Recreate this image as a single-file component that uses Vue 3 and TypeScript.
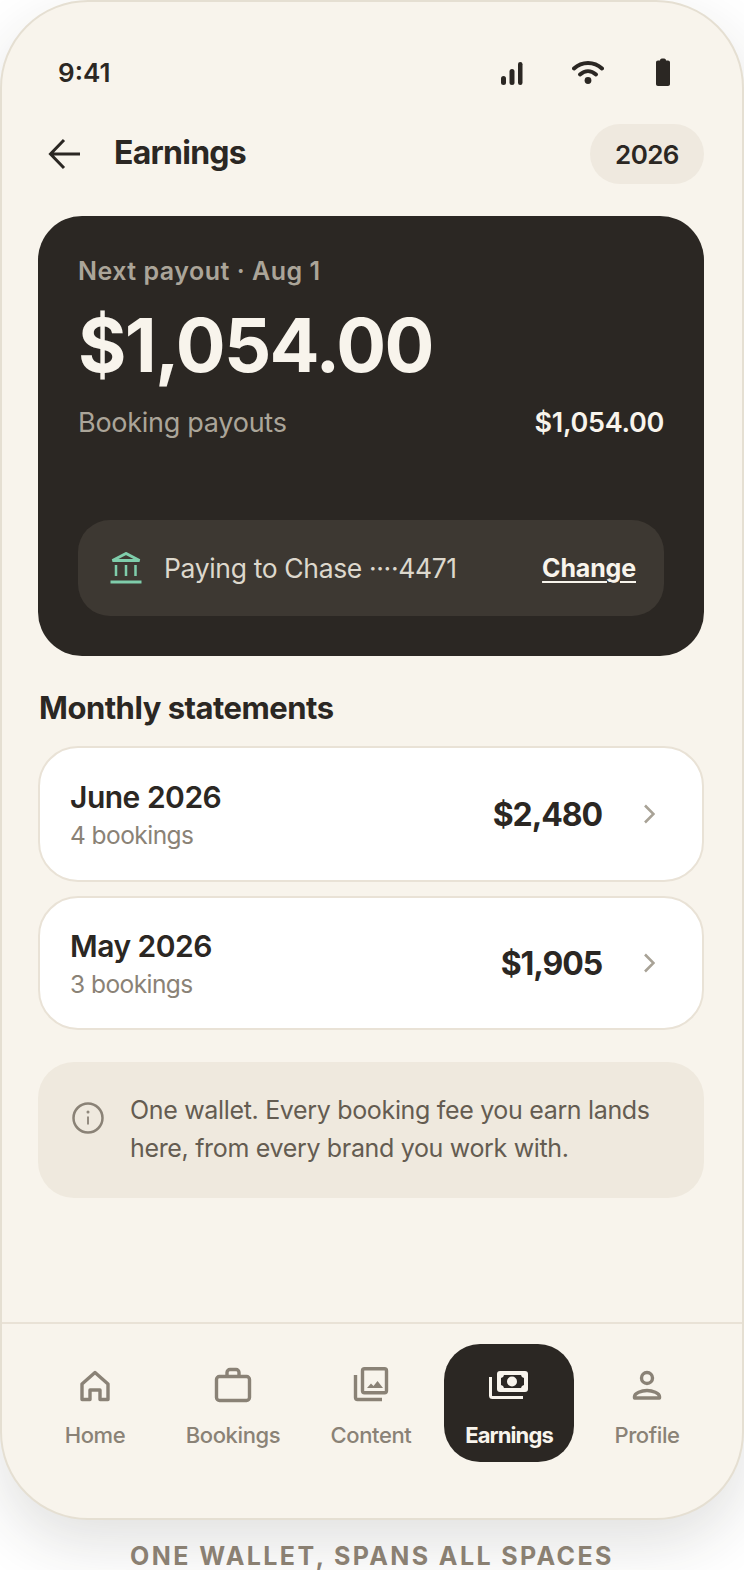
<template>
  <div class="page">
    <div class="phone">
      <div class="status">
        <span class="time">9:41</span>
        <div class="status-icons">
          <svg width="24" height="26" viewBox="0 0 24 26">
            <rect x="1" y="17" width="5" height="9" rx="2.5" />
            <rect x="9.5" y="10" width="5" height="16" rx="2.5" />
            <rect x="18" y="3" width="4.5" height="23" rx="2.2" />
          </svg>
          <svg width="32" height="26" viewBox="0 0 32 26" class="wifi">
            <path d="M2 9.5C10 2 22 2 30 9.5" />
            <path d="M8 15.5c5-4.5 11-4.5 16 0" />
            <circle cx="16" cy="21.5" r="3.4" />
          </svg>
          <svg class="battery" width="14" height="28" viewBox="0 0 14 28">
            <path d="M4 2.5C4 1 5 .5 7 .5s3 .5 3 2h2c1.2 0 2 .8 2 2V26c0 1.200-.8 2-2 2H2c-1.200 0-2-.8-2-2V4.500c0-1.200.8-2 2-2z" />
          </svg>
        </div>
      </div>

      <header class="top">
        <svg class="back" width="34" height="32" viewBox="0 0 34 32">
          <path d="M32 16H3M16 2 2.500 16 16 30" />
        </svg>
        <h1>Earnings</h1>
        <span class="year">2026</span>
      </header>

      <section class="payout">
        <div class="payout-label">Next payout · Aug 1</div>
        <div class="payout-amount">$1,054.00</div>
        <div class="payout-line">
          <span>Booking payouts</span>
          <strong>$1,054.00</strong>
        </div>
        <div class="bank">
          <svg width="32" height="32" viewBox="0 0 32 32">
            <path d="M16 1.500 2.500 8.500h27z" class="roof" />
            <path d="M6 13v11M16 13v11M25.500 13v11" class="cols" />
            <path d="M0.500 30h31" class="base" />
          </svg>
          <span class="bank-text">Paying to Chase ····4471</span>
          <a class="change">Change</a>
        </div>
      </section>

      <h2>Monthly statements</h2>
      <div class="statements">
        <div v-for="s in statements" :key="s.month" class="statement" :class="s.cls">
          <div class="statement-info">
            <div class="month">{{ s.month }}</div>
            <div class="count">{{ s.count }}</div>
          </div>
          <div class="total">{{ s.total }}</div>
          <svg class="chevron" width="12" height="20" viewBox="0 0 12 20">
            <path d="M2 1.500l8.500 8.500-8.500 8.500" />
          </svg>
        </div>
      </div>

      <div class="info">
        <svg width="32" height="32" viewBox="0 0 32 32">
          <circle cx="16" cy="16" r="14.500" />
          <path class="dot" d="M16 14.500v8" />
          <circle class="dot" cx="16" cy="10" r=".6" />
        </svg>
        <p>One wallet. Every booking fee you earn lands here, from every brand you work with.</p>
      </div>

      <nav class="tabs">
        <div v-for="t in tabs" :key="t.label" class="tab" :class="{ active: t.active }">
          <svg width="48" height="48" viewBox="0 0 48 48" v-html="t.icon"></svg>
          <span>{{ t.label }}</span>
        </div>
      </nav>
    </div>
    <div class="caption">ONE WALLET, SPANS ALL SPACES</div>
  </div>
</template>

<script setup lang="ts">
const statements = [
  { month: 'June 2026', count: '4 bookings', total: '$2,480', cls: 'tall' },
  { month: 'May 2026', count: '3 bookings', total: '$1,905', cls: '' },
]

const tabs = [
  {
    label: 'Home',
    icon: '<path d="M11 23 24 11.500 37 23v15.500h-8V29H19v9.500h-8z"/>',
  },
  {
    label: 'Bookings',
    icon: '<rect x="7.500" y="15.500" width="33" height="24" rx="3"/><path d="M18 15v-3.500a3 3 0 0 1 3-3h6a3 3 0 0 1 3 3V15"/>',
  },
  {
    label: 'Content',
    icon: '<rect x="15.500" y="7.700" width="24" height="24" rx="2"/><path d="M8.500 14v22.500a2 2 0 0 0 2 2H35"/><path class="fill" d="M20 27l4-4.500 2.500 2.500 4-5 5.500 7z"/>',
  },
  {
    label: 'Earnings',
    active: true,
    icon: '<path d="M5.500 16v18.500a2 2 0 0 0 2 2H38" stroke-width="3"/><rect class="fill" x="12" y="10" width="31" height="21" rx="3"/><path class="cut" d="M19 14h17a3.500 3.500 0 0 0 3 3v7a3.500 3.500 0 0 0-3 3H19a3.500 3.500 0 0 0-3-3v-7a3.500 3.500 0 0 0 3-3z"/><circle class="fill" cx="27" cy="20.500" r="5"/>',
  },
  {
    label: 'Profile',
    icon: '<circle cx="24" cy="17" r="5.500"/><path d="M11.500 37v-1.500c0-3.500 7-6 12.500-6s12.500 2.500 12.500 6V37z"/>',
  },
]
</script>

<style>
html,
body {
  margin: 0;
  background: #fff;
}
</style>

<style scoped>
.page {
  width: 744px;
  height: 1570px;
  overflow: hidden;
  font-family: Inter, "Liberation Sans", sans-serif;
  color: #2b2723;
}

.phone {
  box-sizing: border-box;
  height: 1520px;
  border: 2px solid #e5dfd2;
  border-radius: 88px;
  background: #f8f4ec;
  box-shadow: 0 24px 60px rgba(44, 40, 37, 0.14);
  display: flex;
  flex-direction: column;
}

.status {
  display: flex;
  align-items: center;
  justify-content: space-between;
  padding: 52px 72px 0 56px;
  height: 36px;
}

.time {
  font-size: 26px;
  font-weight: 600;
}

.status-icons {
  display: flex;
  align-items: center;
  gap: 48px;
}

.status-icons svg {
  fill: #2b2723;
}

.status-icons .wifi path {
  fill: none;
  stroke: #2b2723;
  stroke-width: 4;
  stroke-linecap: round;
}

.status-icons .battery {
  margin-left: 4px;
}

.top {
  display: flex;
  align-items: center;
  gap: 32px;
  height: 60px;
  margin-top: 34px;
  padding: 0 38px 0 46px;
}

.back {
  fill: none;
  stroke: #2b2723;
  stroke-width: 3;
}

h1 {
  flex: 1;
  margin: 0 0 3px;
  font-size: 32px;
  font-weight: 700;
  letter-spacing: -0.75px;
}

.year {
  width: 114px;
  height: 60px;
  border-radius: 30px;
  background: #efe9df;
  display: flex;
  align-items: center;
  justify-content: center;
  font-size: 26px;
  font-weight: 600;
  letter-spacing: -0.6px;
}

.payout {
  box-sizing: border-box;
  height: 440px;
  margin: 32px 38px 0 36px;
  padding: 40px;
  border-radius: 44px;
  background: #2b2723;
  display: flex;
  flex-direction: column;
}

.payout-label {
  font-size: 25px;
  line-height: 30px;
  font-weight: 600;
  letter-spacing: 0.5px;
  color: #aba599;
}

.payout-amount {
  margin-top: 17px;
  font-size: 74px;
  line-height: 84px;
  font-weight: 700;
  letter-spacing: -1.7px;
  color: #f8f4ec;
}

.payout-line {
  display: flex;
  justify-content: space-between;
  align-items: center;
  margin-top: 19px;
  font-size: 27px;
  line-height: 34px;
  letter-spacing: -0.27px;
  color: #aba599;
}

.payout-line strong {
  font-weight: 600;
  letter-spacing: -0.3px;
  color: #f8f4ec;
}

.bank {
  display: flex;
  align-items: center;
  height: 96px;
  margin-top: auto;
  padding: 0 28px 0 32px;
  border-radius: 32px;
  background: #3d3832;
}

.roof {
  fill: none;
  stroke: #7fcdab;
  stroke-width: 3;
}

.cols,
.base {
  fill: none;
  stroke: #7fcdab;
  stroke-width: 2.500;
}

.base {
  stroke-width: 3;
}

.bank-text {
  flex: 1;
  margin-left: 22px;
  font-size: 26.500px;
  letter-spacing: -0.35px;
  color: #ddd8cd;
}

.change {
  font-size: 25px;
  font-weight: 700;
  letter-spacing: -0.15px;
  color: #f8f4ec;
  text-decoration: underline;
  text-underline-offset: 4px;
}

h2 {
  margin: 33px 0 0 37px;
  font-size: 31px;
  line-height: 38px;
  font-weight: 700;
  letter-spacing: -0.5px;
}

.statements {
  display: flex;
  flex-direction: column;
  gap: 14px;
  margin: 19px 38px 0 36px;
}

.statement {
  box-sizing: border-box;
  height: 134px;
  padding: 0 47px 0 30px;
  border: 2px solid #e9e2d6;
  border-radius: 40px;
  background: #fff;
  display: flex;
  align-items: center;
}

.statement.tall {
  height: 136px;
}

.statement-info {
  flex: 1;
  padding-top: 4px;
}

.month {
  font-size: 30px;
  line-height: 38px;
  font-weight: 600;
  letter-spacing: -0.5px;
}

.count {
  font-size: 24.500px;
  line-height: 38px;
  letter-spacing: -0.55px;
  color: #8a8276;
}

.total {
  font-size: 32px;
  font-weight: 700;
  letter-spacing: -1.1px;
  margin-right: 41px;
}

.chevron {
  fill: none;
  stroke: #a8a296;
  stroke-width: 2.600;
}

.info {
  box-sizing: border-box;
  height: 136px;
  margin: 32px 38px 0 36px;
  padding: 28px 34px;
  border-radius: 36px;
  background: #efe9de;
  display: flex;
  gap: 26px;
  align-items: center;
}

.info svg {
  flex: none;
  fill: none;
  stroke: #8a8276;
  stroke-width: 2.500;
  margin-bottom: 24px;
}

.info svg .dot {
  stroke-width: 1.800;
}

.info p {
  margin: 0 0 3px;
  font-size: 25px;
  line-height: 38px;
  letter-spacing: -0.33px;
  color: #645c51;
}

.tabs {
  margin-top: auto;
  border-top: 2px solid #e9e2d6;
  height: 196px;
  box-sizing: border-box;
  padding: 20px 28px 0;
  display: grid;
  grid-template-columns: repeat(5, 130px);
  gap: 8px;
  align-items: start;
}

.tab {
  height: 118px;
  border-radius: 36px;
  display: flex;
  flex-direction: column;
  align-items: center;
  padding-top: 17px;
  box-sizing: border-box;
  font-size: 22px;
  font-weight: 500;
  letter-spacing: -0.4px;
  color: #8a8276;
}

.tab span {
  margin-top: 13px;
}

.tab svg {
  fill: none;
  stroke: #8a8276;
  stroke-width: 3.400;
  stroke-linejoin: round;
}

.tab svg :deep(.fill) {
  fill: #8a8276;
  stroke: none;
}

.tab.active {
  background: #2b2723;
  color: #f8f4ec;
  font-weight: 700;
  letter-spacing: -0.9px;
}

.tab.active svg {
  stroke: #f8f4ec;
}

.tab.active svg :deep(.fill) {
  fill: #f8f4ec;
}

.tab.active svg :deep(.cut) {
  fill: #2b2723;
  stroke: none;
}

.caption {
  margin-top: 20px;
  text-align: center;
  font-size: 25px;
  line-height: 32px;
  font-weight: 700;
  letter-spacing: 2.400px;
  color: #8a8072;
}
</style>
